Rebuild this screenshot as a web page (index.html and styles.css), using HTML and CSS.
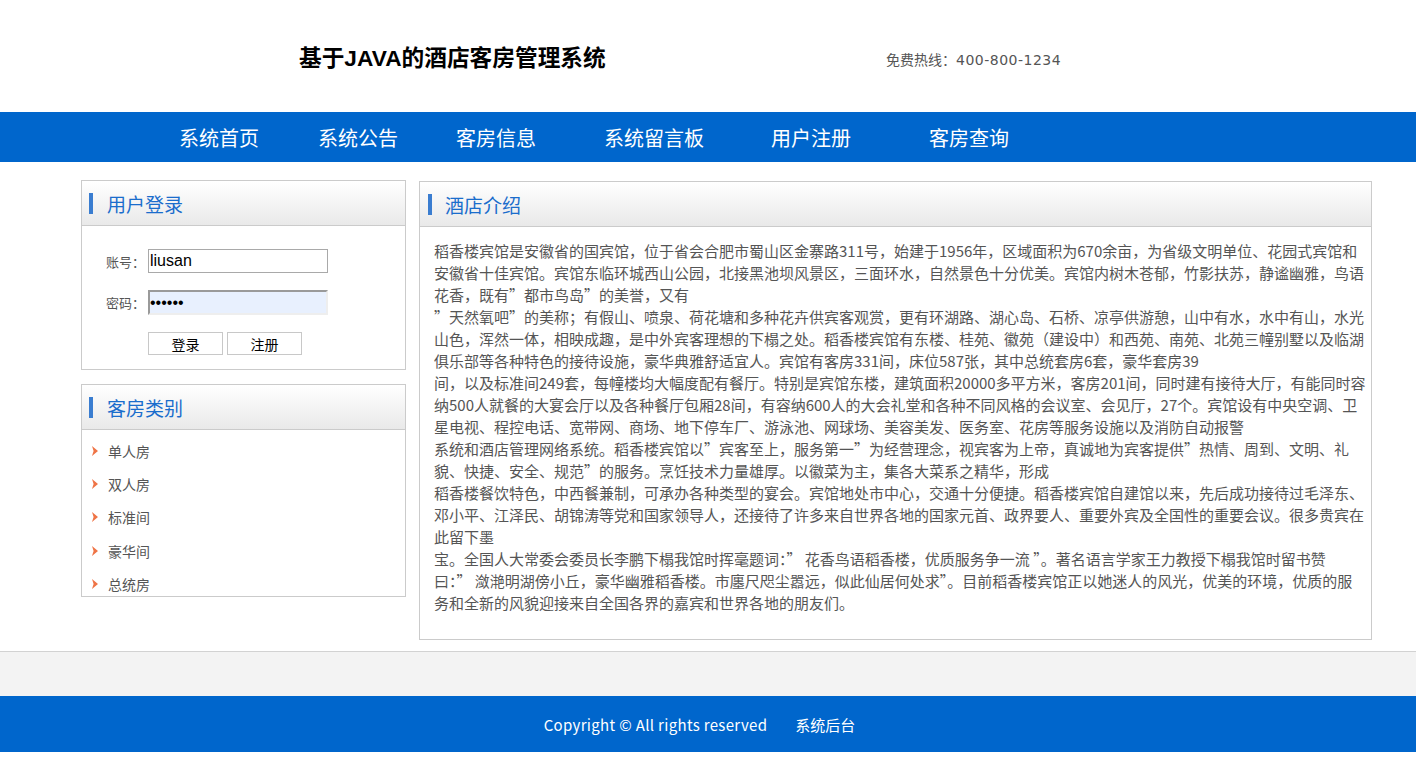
FILE: index.html
```html
<!DOCTYPE html>
<html lang="zh-CN">
<head>
<meta charset="utf-8">
<title>基于JAVA的酒店客房管理系统</title>
<link rel="stylesheet" href="styles.css">
</head>
<body>
<header class="top">
  <h1 class="site-title">基于JAVA的酒店客房管理系统</h1>
  <p class="hotline">免费热线：<span class="hotline-num">400-800-1234</span></p>
</header>
<nav class="mainnav">
  <a class="nav-item" href="#">系统首页</a>
  <a class="nav-item" href="#">系统公告</a>
  <a class="nav-item" href="#">客房信息</a>
  <a class="nav-item" href="#">系统留言板</a>
  <a class="nav-item" href="#">用户注册</a>
  <a class="nav-item" href="#">客房查询</a>
</nav>
<main class="content">
  <aside class="side">
    <section class="box login-box">
      <h2 class="box-title">用户登录</h2>
      <form class="login-form">
        <div class="row"><label class="lbl">账号：</label><input class="field" type="text" value="liusan"></div>
        <div class="row"><label class="lbl">密码：</label><input class="field pwd" type="password" value="123456"></div>
        <div class="btns"><button class="btn" type="button">登录</button><button class="btn" type="button">注册</button></div>
      </form>
    </section>
    <section class="box cat-box">
      <h2 class="box-title">客房类别</h2>
      <ul class="cat-list">
        <li class="cat-item"><svg class="arrow" width="6" height="10" viewBox="0 0 6 10"><polygon points="0,0 6,5 0,10 1.6,5" fill="#ef7446"/></svg>单人房</li>
        <li class="cat-item"><svg class="arrow" width="6" height="10" viewBox="0 0 6 10"><polygon points="0,0 6,5 0,10 1.6,5" fill="#ef7446"/></svg>双人房</li>
        <li class="cat-item"><svg class="arrow" width="6" height="10" viewBox="0 0 6 10"><polygon points="0,0 6,5 0,10 1.6,5" fill="#ef7446"/></svg>标准间</li>
        <li class="cat-item"><svg class="arrow" width="6" height="10" viewBox="0 0 6 10"><polygon points="0,0 6,5 0,10 1.6,5" fill="#ef7446"/></svg>豪华间</li>
        <li class="cat-item"><svg class="arrow" width="6" height="10" viewBox="0 0 6 10"><polygon points="0,0 6,5 0,10 1.6,5" fill="#ef7446"/></svg>总统房</li>
      </ul>
    </section>
  </aside>
  <section class="box intro-box">
    <h2 class="box-title intro-title">酒店介绍</h2>
    <p class="intro">稻香楼宾馆是安徽省的国宾馆，位于省会合肥市蜀山区金寨路311号，始建于1956年，区域面积为670余亩，为省级文明单位、花园式宾馆和<br>安徽省十佳宾馆。宾馆东临环城西山公园，北接黑池坝风景区，三面环水，自然景色十分优美。宾馆内树木苍郁，竹影扶苏，静谧幽雅，鸟语<br>花香，既有”都市鸟岛”的美誉，又有<br>”天然氧吧”的美称；有假山、喷泉、荷花塘和多种花卉供宾客观赏，更有环湖路、湖心岛、石桥、凉亭供游憩，山中有水，水中有山，水光<br>山色，浑然一体，相映成趣，是中外宾客理想的下榻之处。稻香楼宾馆有东楼、桂苑、徽苑（建设中）和西苑、南苑、北苑三幢别墅以及临湖<br>俱乐部等各种特色的接待设施，豪华典雅舒适宜人。宾馆有客房331间，床位587张，其中总统套房6套，豪华套房39<br>间，以及标准间249套，每幢楼均大幅度配有餐厅。特别是宾馆东楼，建筑面积20000多平方米，客房201间，同时建有接待大厅，有能同时容<br>纳500人就餐的大宴会厅以及各种餐厅包厢28间，有容纳600人的大会礼堂和各种不同风格的会议室、会见厅，27个。宾馆设有中央空调、卫<br>星电视、程控电话、宽带网、商场、地下停车厂、游泳池、网球场、美容美发、医务室、花房等服务设施以及消防自动报警<br>系统和酒店管理网络系统。稻香楼宾馆以”宾客至上，服务第一”为经营理念，视宾客为上帝，真诚地为宾客提供”热情、周到、文明、礼<br>貌、快捷、安全、规范”的服务。烹饪技术力量雄厚。以徽菜为主，集各大菜系之精华，形成<br>稻香楼餐饮特色，中西餐兼制，可承办各种类型的宴会。宾馆地处市中心，交通十分便捷。稻香楼宾馆自建馆以来，先后成功接待过毛泽东、<br>邓小平、江泽民、胡锦涛等党和国家领导人，还接待了许多来自世界各地的国家元首、政界要人、重要外宾及全国性的重要会议。很多贵宾在<br>此留下墨<br>宝。全国人大常委会委员长李鹏下榻我馆时挥毫题词：” 花香鸟语稻香楼，优质服务争一流 ”。著名语言学家王力教授下榻我馆时留书赞<br>曰：” 潋滟明湖傍小丘，豪华幽雅稻香楼。市廛尺咫尘嚣远，似此仙居何处求”。目前稻香楼宾馆正以她迷人的风光，优美的环境，优质的服<br>务和全新的风貌迎接来自全国各界的嘉宾和世界各地的朋友们。</p>
  </section>
</main>
<footer class="footer">
  <div class="foot-gray"></div>
  <div class="foot-blue"><span class="copy">Copyright © All rights reserved</span><a class="admin" href="#">系统后台</a></div>
</footer>
</body>
</html>
```

FILE: styles.css
```css
* { box-sizing: border-box; }
body {
  margin: 0;
  font-family: "Noto Sans CJK SC", "Microsoft YaHei", sans-serif;
  background: #fff;
  color: #555;
}
.top {
  height: 112px;
  display: flex;
  align-items: center;
  padding-left: 299px;
}
.site-title {
  margin: 0;
  width: 587px;
  font-family: "Liberation Sans", "Noto Sans CJK SC", sans-serif;
  font-size: 22.7px;
  font-weight: bold;
  color: #000;
}
.hotline {
  margin: 6px 0 0;
  font-size: 14px;
  color: #555;
}
.hotline-num {
  font-family: "DejaVu Sans", "Noto Sans CJK SC", sans-serif;
  font-size: 14px;
  letter-spacing: 0.5px;
}
.mainnav {
  height: 50px;
  background: #0066cc;
  display: flex;
  align-items: center;
  padding-left: 179px;
}
.nav-item {
  color: #fff;
  text-decoration: none;
  font-size: 20px;
}
.nav-item:nth-child(2) { margin-left: 59px; }
.nav-item:nth-child(3) { margin-left: 58px; }
.nav-item:nth-child(4) { margin-left: 68px; }
.nav-item:nth-child(5) { margin-left: 67px; }
.nav-item:nth-child(6) { margin-left: 78px; }

.content {
  display: flex;
  align-items: flex-start;
  gap: 13px;
  padding: 18px 0 11px 81px;
}
.side {
  width: 325px;
  flex: none;
  display: flex;
  flex-direction: column;
  gap: 14px;
}
.box {
  border: 1px solid #cbcbcb;
  background: #fff;
}
.box-title {
  margin: 0;
  height: 45px;
  border-bottom: 1px solid #cbcbcb;
  background: linear-gradient(#ffffff, #e9e9e9);
  display: flex;
  align-items: center;
  padding-left: 7px;
  font-size: 19px;
  font-weight: normal;
  color: #1a6dcc;
}
.box-title::before {
  content: "";
  width: 4px;
  height: 21px;
  background: #3a7dd0;
  margin-right: 14px;
}
.intro-title { padding-left: 8px; }
.intro-title::before { margin-right: 13px; }

.login-form {
  padding: 23px 0 14px 24px;
}
.row {
  display: flex;
  align-items: center;
  margin-bottom: 17px;
}
.lbl {
  width: 42px;
  font-size: 13px;
  color: #555;
}
.field {
  width: 180px;
  height: 24px;
  margin: 0;
  border: 1px solid #a9a9a9;
  padding: 0 1px;
  font-family: "Liberation Sans", Arial, sans-serif;
  font-size: 16px;
  color: #000;
  background: #fff;
}
.pwd {
  height: 25px;
  border: 2px solid;
  border-color: #9a9a9a #eeeeee #eeeeee #9a9a9a;
  background: #e8f0fe;
  padding: 0;
}
.btns {
  display: flex;
  gap: 4px;
  padding-left: 42px;
}
.btn {
  width: 75px;
  height: 23px;
  margin: 0;
  padding: 0;
  border: 1px solid #c8c8c8;
  background: #fff;
  font-family: "Noto Sans CJK SC", sans-serif;
  font-size: 14px;
  color: #000;
}

.cat-box {
  height: 213px;
  overflow: hidden;
}
.cat-list {
  list-style: none;
  margin: 0;
  padding: 4px 0 0 10px;
}
.cat-item {
  height: 33.3px;
  display: flex;
  align-items: center;
  font-size: 14px;
  color: #555;
}
.arrow {
  margin-right: 10px;
  flex: none;
}

.intro-box {
  width: 953px;
  flex: none;
  margin-top: 1px;
}
.intro {
  margin: 0;
  padding: 13px 0 25px 14px;
  font-size: 15px;
  line-height: 22px;
  color: #555;
  white-space: nowrap;
}

.foot-gray {
  height: 45px;
  border-top: 1px solid #d2d2d2;
  background: #f3f3f3;
}
.foot-blue {
  height: 56px;
  background: #0066cc;
  display: flex;
  justify-content: center;
  align-items: center;
  gap: 28px;
  padding-right: 17px;
  color: #fff;
  font-size: 15px;
}
.copy {
  letter-spacing: 0.33px;
}
.admin {
  color: #fff;
  text-decoration: none;
}
```
